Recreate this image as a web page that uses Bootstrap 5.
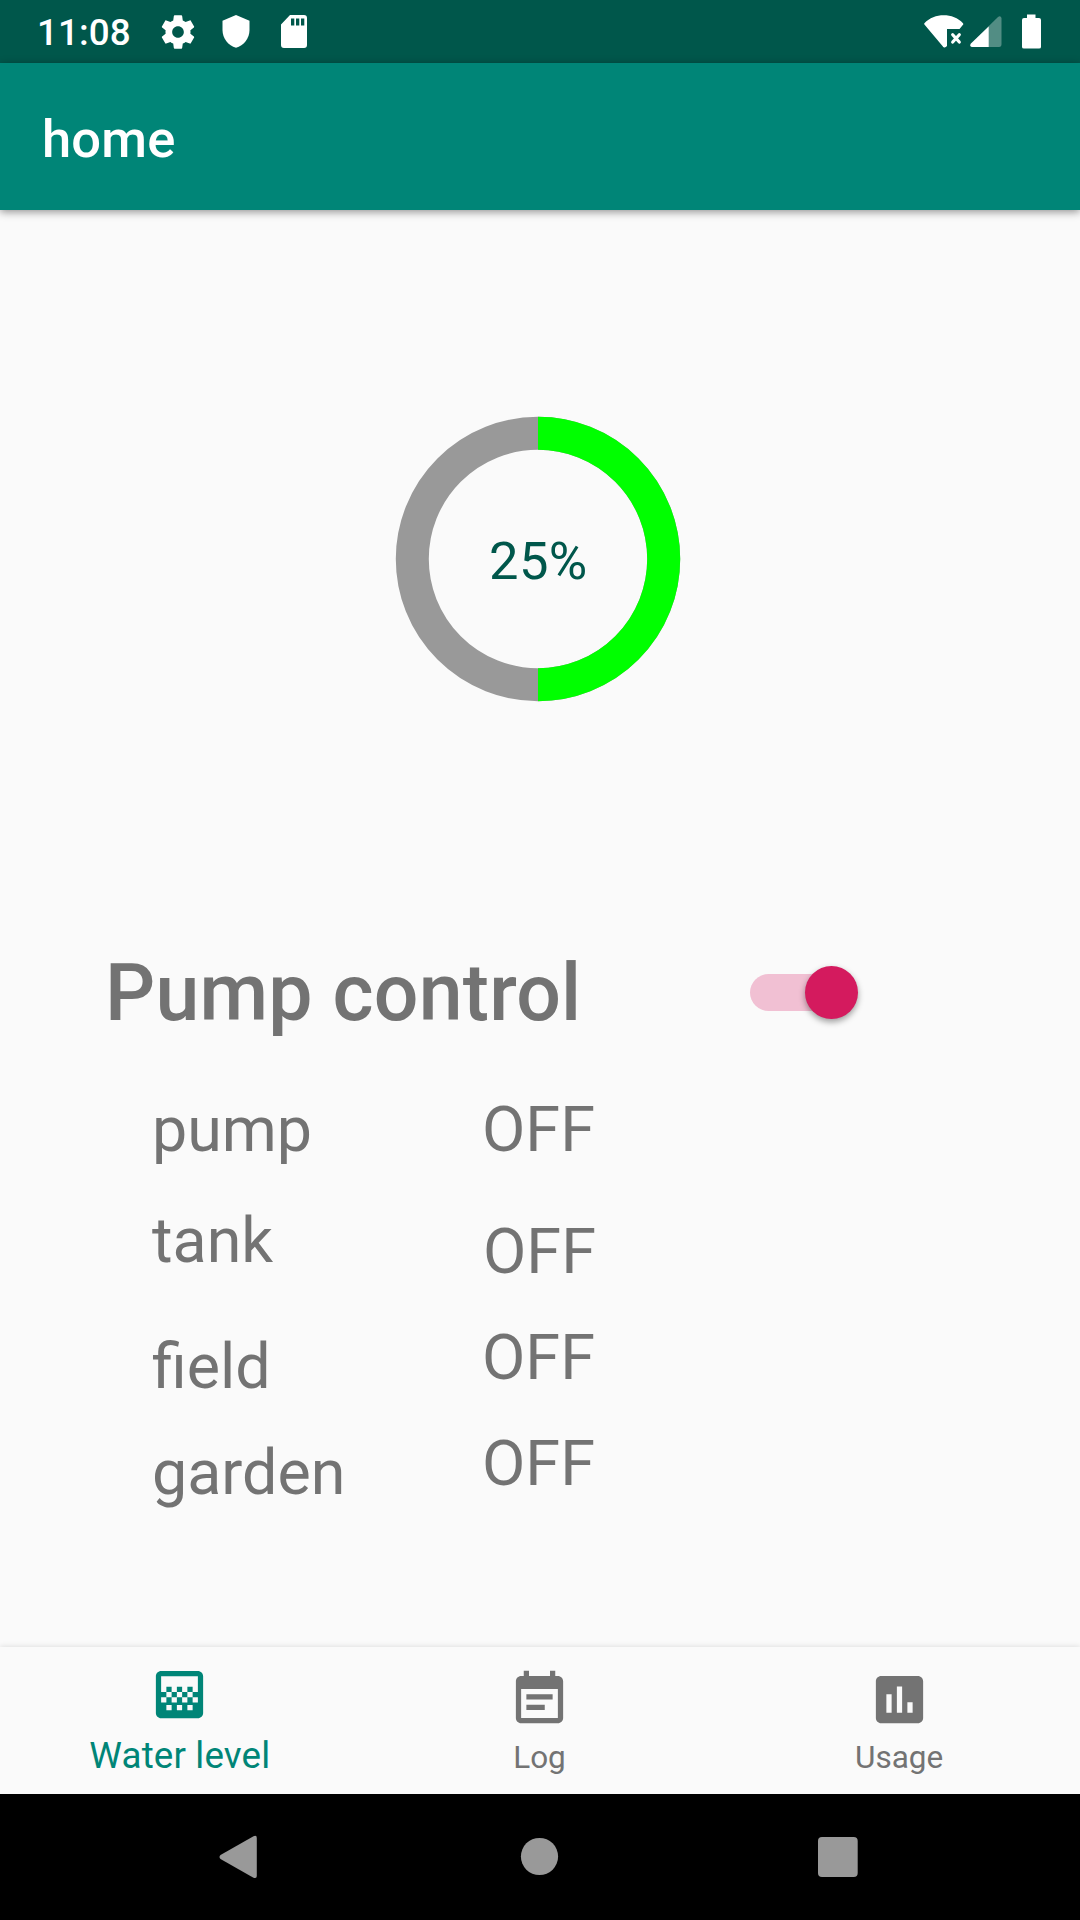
<!DOCTYPE html>
<html lang="en">
<head>
<meta charset="utf-8">
<meta name="viewport" content="width=device-width, initial-scale=1">
<title>home</title>
<link href="https://cdn.jsdelivr.net/npm/bootstrap@5.3.0/dist/css/bootstrap.min.css" rel="stylesheet">
<style>
  body { font-family: Roboto, "Noto Sans", sans-serif; background: #fafafa; color: #737373; height: 1920px; overflow: hidden; }
  svg { display: block; flex: none; }
  .status-strip { height: 63px; background: #00574b; padding-left: 37px; padding-right: 39px; }
  .clock { font-size: 36.75px; line-height: 44px; font-weight: 500; width: 121px; padding-top: 3px; letter-spacing: .1px; white-space: nowrap; }
  .app-bar { height: 147px; background: #008577; padding: 0 42px; box-shadow: 0 2px 8px rgba(0,0,0,.42); z-index: 1; }
  .app-title { font-size: 52.5px; line-height: 62px; font-weight: 500; padding-top: 4px; letter-spacing: .2px; }
  .gauge { margin-top: 206px; width: 286px; margin-left: 395px; }
  .gauge-value { font-size: 52.5px; fill: #00574b; letter-spacing: .3px; }
  .control-row { margin-top: 239px; padding-left: 105px; height: 104px; }
  .control-title { font-size: 78.75px; line-height: 104px; font-weight: 500; width: 645px; letter-spacing: .2px; }
  .pump-switch { width: 100px; height: 37px; margin-bottom: 2px; border-radius: 19px; background: #f1c0d3; border: 0; padding: 0; }
  .pump-thumb { width: 53px; height: 53px; margin-left: 55px; flex: none; border-radius: 50%; background: #d41a5e; box-shadow: 0 3px 6px rgba(0,0,0,.38); }
  .status-list { margin-top: 43px; padding-left: 152px; font-size: 63px; line-height: 84px; }
  .names { width: 330px; font-size: 62.75px; }
  .gap-s { margin-top: 22px; }
  .gap-m { margin-top: 38px; padding-left: 1px; }
  .gap-l { margin-top: 42px; }
  .gap-t { margin-top: 27px; }
  .tabs { height: 147px; background: #fafafa; padding-right: 1px; box-shadow: 0 -1px 5px rgba(0,0,0,.1); }
  .tab { padding-top: 21px; font-size: 31.5px; line-height: 37px; gap: 8px; color: #737373; text-decoration: none; }
  .tab-on { padding-top: 16px; font-size: 36.75px; line-height: 43px; letter-spacing: .15px; color: #008577; }
  .keys { height: 126px; }
</style>
</head>
<body class="d-flex flex-column">
  <header class="status-strip d-flex align-items-center text-white flex-shrink-0">
    <div class="clock">11:08</div>
    <svg width="40" height="40" viewBox="0 0 24 24" fill="#fff"><path d="M19.430 12.980c.04-.32.07-.64.07-.98s-.03-.66-.07-.98l2.110-1.650c.19-.15.24-.42.12-.64l-2-3.460c-.12-.22-.39-.3-.61-.22l-2.490 1c-.52-.4-1.080-.73-1.690-.98l-.38-2.650C14.460 2.180 14.250 2 14 2h-4c-.25 0-.46.18-.49.42l-.38 2.650c-.61.25-1.170.59-1.690.98l-2.490-1c-.23-.09-.49 0-.61.22l-2 3.460c-.13.22-.07.49.12.64l2.110 1.650c-.04.32-.07.65-.07.98s.03.66.07.98l-2.110 1.650c-.19.15-.24.42-.12.64l2 3.460c.12.22.39.3.61.22l2.490-1c.52.4 1.080.73 1.690.98l.38 2.650c.03.24.24.42.49.42h4c.25 0 .46-.18.49-.42l.38-2.650c.61-.25 1.170-.59 1.690-.98l2.490 1c.23.09.49 0 .61-.22l2-3.460c.12-.22.07-.49-.12-.64l-2.110-1.650zM12 15.500c-1.930 0-3.500-1.570-3.500-3.500s1.570-3.500 3.500-3.500 3.500 1.570 3.500 3.500-1.570 3.500-3.500 3.500z"/></svg>
    <svg class="ms-4" width="28" height="33" viewBox="0 0 28 33" fill="#fff"><path d="M14 0L.5 5.700V15c0 8.500 5.800 15.800 13.500 17.700C21.700 30.800 27.500 23.500 27.500 15V5.700z"/></svg>
    <svg width="57" height="33" viewBox="0 0 57 33" fill="#fff"><path fill-rule="evenodd" d="M40 0h14q3 0 3 3v27q0 3-3 3H34q-3 0-3-3V9.500zM41 3.500v7h3.300v-7zm5 0v7h3.300v-7zm5 0v7h3.300v-7z"/></svg>
    <svg class="ms-auto" width="40" height="33" viewBox="0 0 40 33" fill="#fff"><path d="M.4 8.200C5.500 2.800 12.500.3 19.700.3S34 2.800 39 8.200q.6.800 0 1.600L35.500 14H23v17q-1.500 2-3.300 1.300-.5-.2-1-1L.4 9.500q-.5-.7 0-1.300z"/><path d="M28.700 19.700l6.600 7.300m0-7.300L28.700 27" stroke="#fff" stroke-width="3.200" stroke-linecap="round"/></svg>
    <svg width="38" height="33" viewBox="0 0 38 33" fill="#fff"><path d="M37.500 3v26q0 3-2.500 3H8q-3-1-1-3.500L34 2q2.500-2 3.500 1z" opacity=".32"/><path d="M24.700 11.500V32H8q-3-1-1-3.500z"/></svg>
    <svg width="39" height="35" viewBox="0 0 39 35" fill="#fff"><path d="M25 .500h8.500v3.500H37q2 0 2 2v27q0 1.500-2 1.500H22q-2 0-2-1.500V6q0-2 2-2h3z"/></svg>
  </header>

  <nav class="app-bar navbar flex-shrink-0 position-relative text-white">
    <div class="app-title">home</div>
  </nav>

  <main class="flex-grow-1">
    <div class="gauge">
      <svg width="286" height="286" viewBox="0 0 286 286" role="img">
        <circle cx="143" cy="143" r="125.700" fill="none" stroke="#999" stroke-width="33"/>
        <path d="M143 17.300a125.700 125.700 0 0 1 0 251.400" fill="none" stroke="#0f0" stroke-width="33"/>
        <text class="gauge-value" x="143.300" y="163" text-anchor="middle">25%</text>
      </svg>
    </div>

    <div class="control-row d-flex align-items-center">
      <h1 class="control-title m-0" id="pump">Pump control</h1>
      <button class="pump-switch d-flex align-items-center" type="button" role="switch" aria-checked="true" aria-labelledby="pump"><span class="pump-thumb"></span></button>
    </div>

    <div class="status-list d-flex align-items-start">
      <div class="names">
        <div>pump</div>
        <div class="gap-t">tank</div>
        <div class="gap-l">field</div>
        <div class="gap-s">garden</div>
      </div>
      <div>
        <div>OFF</div>
        <div class="gap-m">OFF</div>
        <div class="gap-s">OFF</div>
        <div class="gap-s">OFF</div>
      </div>
    </div>
  </main>

  <nav class="tabs d-flex flex-shrink-0">
    <a class="tab tab-on col-4 d-flex flex-column align-items-center" href="#">
      <svg width="63" height="63" viewBox="0 0 24 24" fill="currentColor"><path d="M11 9h2v2h-2zm-2 2h2v2H9zm4 0h2v2h-2zm2-2h2v2h-2zM7 9h2v2H7zm12-6H5c-1.100 0-2 .9-2 2v14c0 1.100.9 2 2 2h14c1.100 0 2-.9 2-2V5c0-1.100-.9-2-2-2zM9 18H7v-2h2v2zm4 0h-2v-2h2v2zm4 0h-2v-2h2v2zm2-7h-2v2h2v2h-2v-2h-2v2h-2v-2h-2v2H9v-2H7v2H5v-2h2v-2H5V5h14v6z"/></svg>
      <span>Water level</span>
    </a>
    <a class="tab col-4 d-flex flex-column align-items-center" href="#">
      <svg width="63" height="63" viewBox="0 0 24 24" fill="currentColor"><path d="M17 10H7v2h10v-2zm2-7h-1V1h-2v2H8V1H6v2H5c-1.110 0-1.990.9-1.990 2L3 19c0 1.100.89 2 2 2h14c1.100 0 2-.9 2-2V5c0-1.100-.9-2-2-2zm0 16H5V8h14v11zm-5-5H7v2h7v-2z"/></svg>
      <span>Log</span>
    </a>
    <a class="tab col-4 d-flex flex-column align-items-center" href="#">
      <svg width="63" height="63" viewBox="0 0 24 24" fill="currentColor"><path d="M19 3H5c-1.100 0-2 .9-2 2v14c0 1.100.9 2 2 2h14c1.100 0 2-.9 2-2V5c0-1.100-.9-2-2-2zM9 17H7v-7h2v7zm4 0h-2V7h2v10zm4 0h-2v-4h2v4z"/></svg>
      <span>Usage</span>
    </a>
  </nav>

  <footer class="keys bg-black flex-shrink-0">
    <svg width="1080" height="126" viewBox="0 0 1080 126" fill="#999">
      <path d="M220.500 61L253.500 42.300q3.300-1.500 3.300 1.700V82q0 3-3.300 1.700L220.500 65q-2-2 0-4z"/>
      <circle cx="539.500" cy="62.500" r="18.600"/>
      <rect x="818" y="43" width="39.700" height="40" rx="4"/>
    </svg>
  </footer>
  <script src="https://cdn.jsdelivr.net/npm/bootstrap@5.3.0/dist/js/bootstrap.bundle.min.js"></script>
</body>
</html>
